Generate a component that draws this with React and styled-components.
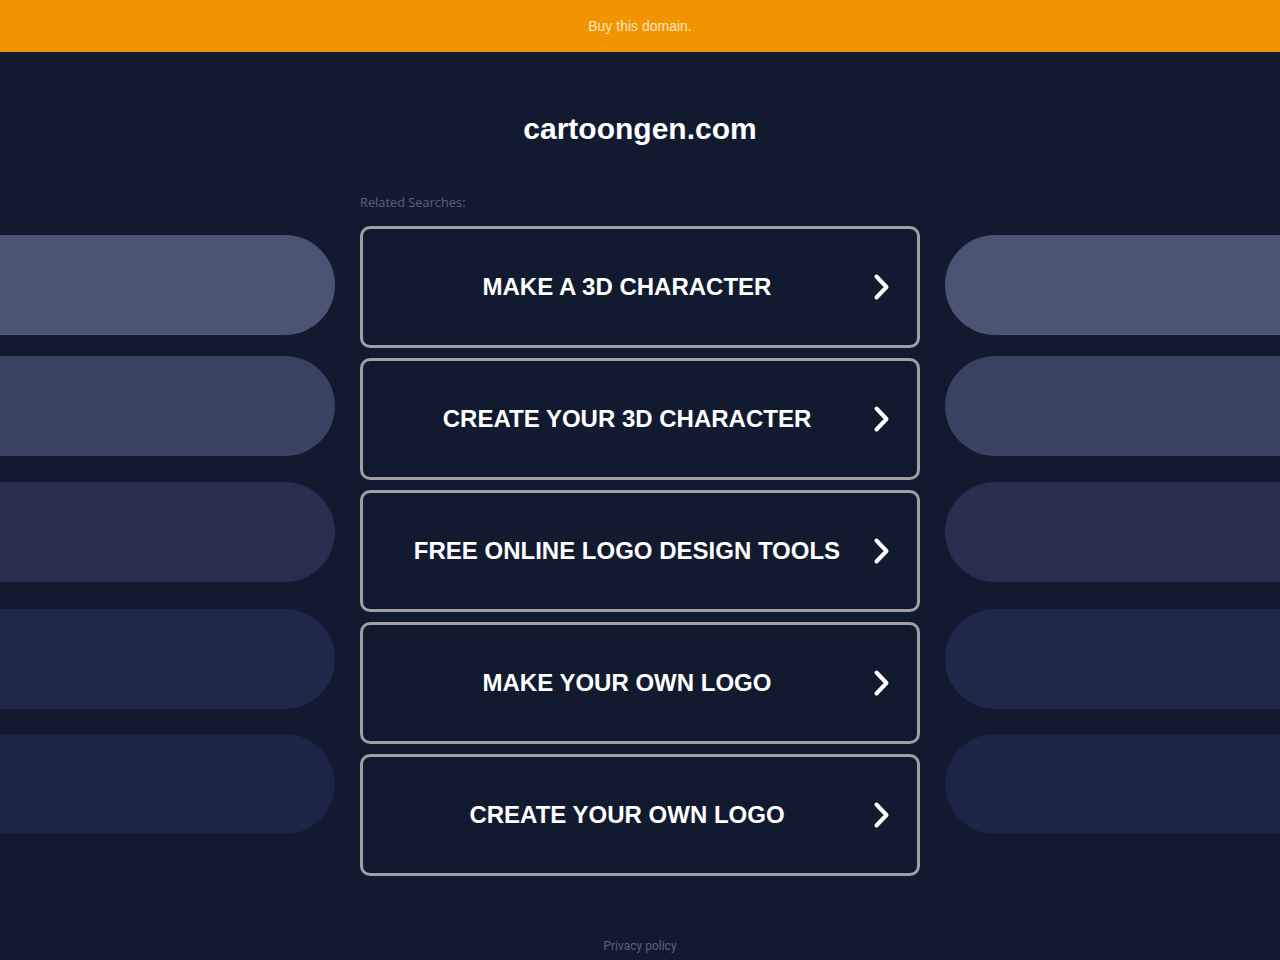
import React from 'react';
import styled, { createGlobalStyle } from 'styled-components';

const GlobalStyle = createGlobalStyle`
  html, body {
    margin: 0;
    padding: 0;
    background: #121a30;
  }
  body {
    font-family: "Liberation Sans", Arial, sans-serif;
  }
`;

const Page = styled.div`
  width: 1280px;
  height: 960px;
  background: #121a30;
  overflow: hidden;
`;

const TopBar = styled.a`
  display: flex;
  align-items: center;
  justify-content: center;
  height: 52px;
  background: #f29400;
  color: #fde6c4;
  font-size: 14px;
  text-decoration: none;
`;

const Main = styled.div`
  display: grid;
  grid-template-columns: 335px 560px 335px;
  column-gap: 25px;
`;

const Side = styled.div`
  display: flex;
  flex-direction: column;
  padding-top: 183px;
`;

const Pill = styled.div`
  height: 100px;
  margin-top: ${p => p.$top}px;
  background: ${p => p.$color};
  border-radius: ${p => (p.$left ? '0 50px 50px 0' : '50px 0 0 50px')};
`;

const Center = styled.div`
  display: flex;
  flex-direction: column;
`;

const Title = styled.h1`
  margin: 59px 0 0;
  text-align: center;
  color: #ffffff;
  font-size: 30px;
  font-weight: bold;
  line-height: 36px;
`;

const Related = styled.div`
  margin-top: 47px;
  color: #5a6180;
  font-family: "Open Sans", sans-serif;
  font-size: 12.8px;
  line-height: 16px;
`;

const List = styled.div`
  display: flex;
  flex-direction: column;
  gap: 10px;
  margin-top: 16px;
`;

const Card = styled.a`
  display: grid;
  grid-template-areas: 'cell';
  align-items: center;
  height: 116px;
  border: 3px solid #a0a0a0;
  border-radius: 10px;
  text-decoration: none;
  color: #ffffff;
`;

const CardText = styled.span`
  grid-area: cell;
  padding-right: 26px;
  text-align: center;
  font-size: 24px;
  font-weight: bold;
`;

const Arrow = styled.svg`
  grid-area: cell;
  justify-self: end;
  margin-right: 27px;
  width: 17px;
  height: 28px;
`;

const Footer = styled.div`
  margin-top: 63px;
  text-align: center;
  color: #5a6180;
  font-family: Roboto, sans-serif;
  font-size: 12px;
`;

const pills = [
  { top: 0, color: '#4b5573' },
  { top: 21, color: '#394261' },
  { top: 26, color: '#282f4e' },
  { top: 27, color: '#1f2849' },
  { top: 25, color: '#1c2546' },
];

const searches = [
  'MAKE A 3D CHARACTER',
  'CREATE YOUR 3D CHARACTER',
  'FREE ONLINE LOGO DESIGN TOOLS',
  'MAKE YOUR OWN LOGO',
  'CREATE YOUR OWN LOGO',
];

const Chevron = () => (
  <Arrow viewBox="0 0 17 28">
    <path d="M3.5 3.5 L13.5 14 L3.5 24.5" fill="none" stroke="#ffffff" strokeWidth="4" strokeLinecap="round" strokeLinejoin="round" />
  </Arrow>
);

export default function App() {
  return (
    <Page>
      <GlobalStyle />
      <TopBar href="#">Buy this domain.</TopBar>
      <Main>
        <Side>
          {pills.map((p, i) => (
            <Pill key={i} $left $top={p.top} $color={p.color} />
          ))}
        </Side>
        <Center>
          <Title>cartoongen.com</Title>
          <Related>Related Searches:</Related>
          <List>
            {searches.map(s => (
              <Card key={s} href="#">
                <CardText>{s}</CardText>
                <Chevron />
              </Card>
            ))}
          </List>
          <Footer>Privacy policy</Footer>
        </Center>
        <Side>
          {pills.map((p, i) => (
            <Pill key={i} $top={p.top} $color={p.color} />
          ))}
        </Side>
      </Main>
    </Page>
  );
}
